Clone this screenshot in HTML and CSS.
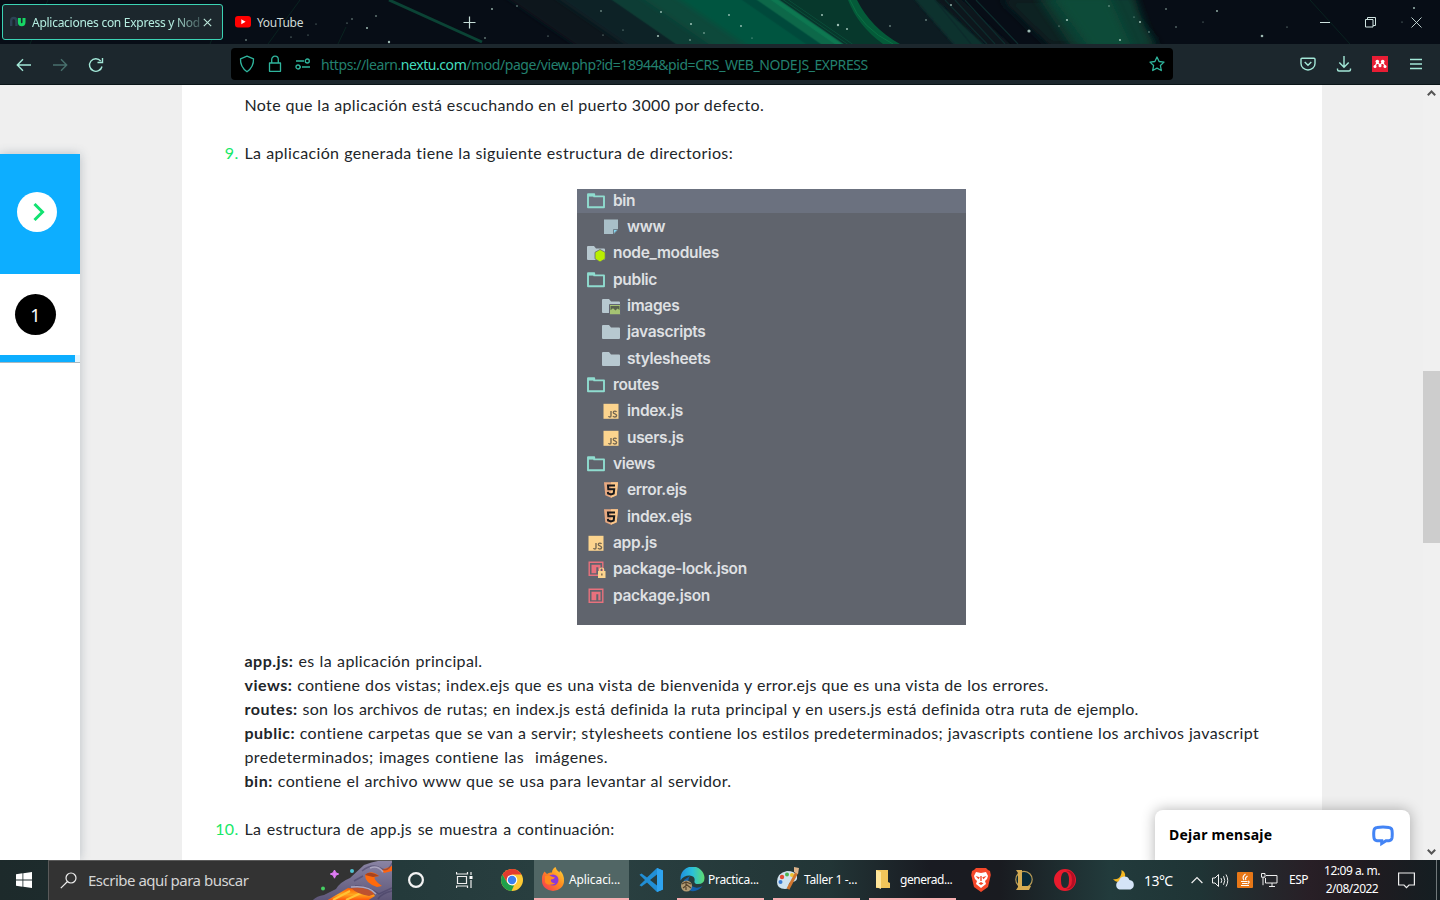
FILE: index.html
```html
<!DOCTYPE html>
<html lang="es">
<head>
<meta charset="utf-8">
<title>Aplicaciones con Express y NodeJS</title>
<link rel="stylesheet" href="styles.css">
</head>
<body>
<svg class="defs" width="0" height="0">
  <defs>
    <linearGradient id="ff" x1="1" y1="0" x2="0" y2="1"><stop offset="0" stop-color="#ffe13c"/><stop offset=".45" stop-color="#ff8a1e"/><stop offset="1" stop-color="#f5305a"/></linearGradient>
    <linearGradient id="edge" x1="0" y1="0" x2="1" y2="0"><stop offset="0" stop-color="#1f8fe0"/><stop offset=".5" stop-color="#2bc0d8"/><stop offset="1" stop-color="#5ddc70"/></linearGradient>
    <linearGradient id="lava" x1="0" y1="0" x2="0" y2="1"><stop offset="0" stop-color="#ff5a00"/><stop offset=".5" stop-color="#ffa51e"/><stop offset="1" stop-color="#ff4a08"/></linearGradient>
    <linearGradient id="rock" x1="0" y1="0" x2="0" y2="1"><stop offset="0" stop-color="#8a84a4"/><stop offset="1" stop-color="#5c5577"/></linearGradient>
    <symbol id="i-open" viewBox="0 0 18 16"><path d="M1 14.2V1.2h6.2v2.2H17v10.8z" fill="none" stroke="#8fdccf" stroke-width="1.9" stroke-linejoin="round"/><path d="M1 1h6v2.6H1z" fill="#8fdccf"/></symbol>
    <symbol id="i-folder" viewBox="0 0 18 16"><path d="M0 2Q0 1 1 1h6l2 2.4h8q1 0 1 1V14q0 1-1 1H1q-1 0-1-1z" fill="#b7c8d0"/></symbol>
    <symbol id="i-js" viewBox="0 0 18 16"><path d="M1.500 .8h15v15H1.500z" fill="#fcd48e"/><path d="M9 8v4.700q0 1.300-1.100 1.300T6.500 13.100M14.500 9q-.5-.9-1.700-.9-1.500 0-1.500 1.300 0 1 1.600 1.400 1.700.5 1.700 1.700 0 1.500-1.800 1.500-1.300 0-1.800-1" fill="none" stroke="#776953" stroke-width="1.400"/></symbol>
    <symbol id="i-html" viewBox="0 0 18 16"><path d="M2 .3h14l-1.300 13L9 15.700l-5.700-2.400z" fill="#e8a981"/><path d="M9 .3h7l-1.300 13L9 15.700z" fill="#fbc78a"/><path d="M13 3.600H6l.3 3.600h5.900l-.5 4.300L9 12.400l-2.900-.9-.2-1.600" fill="none" stroke="#17181b" stroke-width="2"/></symbol>
    <symbol id="i-npm" viewBox="0 0 18 16"><path d="M2.200 1.300h13.600v13H2.200z" fill="none" stroke="#e8717d" stroke-width="1.400"/><path d="M4.500 3.700h9v8.600h-2.200V6.200h-2v6.100H4.500z" fill="#e8717d"/></symbol>
  </defs>
</svg>

<header class="tabs">
  <svg class="sky" viewBox="0 0 1440 44">
    <defs>
      <filter id="soft" x="-20%" y="-50%" width="140%" height="200%"><feGaussianBlur stdDeviation="4"/></filter>
      <filter id="soft1" x="-20%" y="-50%" width="140%" height="200%"><feGaussianBlur stdDeviation="1"/></filter>
    </defs>
    <rect width="1440" height="44" fill="#070d16"/>
    <g transform="matrix(1 0 1.450 1 0 0)">
      <path d="M510-10h60v64h-60z" fill="#09161d" filter="url(#soft)"/>
      <path d="M560-10h330v64H560z" fill="#0a2426" filter="url(#soft)"/>
      <path d="M612-10h70v64h-70z" fill="#0a3c35" filter="url(#soft1)"/>
      <path d="M645-10h60v64h-60z" fill="#08483a" filter="url(#soft)"/>
      <path d="M680-10h90v64h-90z" fill="#065441" filter="url(#soft)"/>
      <path d="M742-10h18v64h-18z" fill="#05493a" filter="url(#soft1)"/>
      <path d="M757-10h23v64h-23z" fill="#086848" filter="url(#soft1)"/>
      <path d="M771-10h7v64h-7z" fill="#0a7851" filter="url(#soft1)"/>
      <path d="M781-10h70v64h-70z" fill="#07382c"/>
      <path d="M783-10h1v64h-1zM788-10h1v64h-1z" fill="#0b543e"/>
    </g>
    <path d="M853-2h60q20 20 65 48h-82Q865 28 853-2z" fill="#0a1d21" filter="url(#soft1)"/>
    <path d="M848 0h9q14 28 43 44h-17Q858 26 848 0z" fill="#045b39"/>
    <path d="M850 0Q861 28 893 44" fill="none" stroke="#0a7044"/>
    <path d="M913-2h22l52 48h-32z" fill="#0e302f" filter="url(#soft1)"/>
    <path d="M935-2h25l52 48h-25z" fill="#09191f" filter="url(#soft1)"/>
    <path d="M955 0l40 44M965 0l40 44M976 0l42 44M945 0l42 44M935 0l36 44" stroke="#0d2b2c" stroke-width="1.300"/>
    <path d="M1000-2h120l40 48h-110z" fill="#082022" filter="url(#soft)"/>
    <path d="M1036-6h98q8 30 22 56h-82z" fill="#0b3e31" filter="url(#soft)"/>
    <path d="M1050-6h58l25 56h-42z" fill="#0d503a" opacity=".8" filter="url(#soft)"/>
    <path d="M389 0l93 42" stroke="#0b4335" stroke-width="3"/>
    <path d="M222 14l-12 30M346 27l-8 17M48 0L30 44M300 0l-32 44M1310 0l40 44" stroke="#0a2320"/>
    <g fill="#b9d8ce" opacity=".85">
      <circle cx="389" cy="42" r="1.200"/><circle cx="367" cy="28" r="1"/><circle cx="376" cy="16" r=".8"/><circle cx="352" cy="19" r=".7"/><circle cx="347" cy="23" r=".6"/><circle cx="316" cy="24" r=".5"/><circle cx="246" cy="40" r=".8"/><circle cx="291" cy="37" r=".6"/><circle cx="308" cy="35" r=".5"/>
      <circle cx="492" cy="9" r=".9"/><circle cx="517" cy="6" r=".7"/><circle cx="485" cy="38" r=".8"/><circle cx="548" cy="36" r=".6"/><circle cx="601" cy="11" r=".8"/><circle cx="603" cy="35" r=".6"/><circle cx="623" cy="30" r=".6"/><circle cx="661" cy="12" r=".9"/><circle cx="658" cy="36" r="1.100"/><circle cx="691" cy="24" r="1"/><circle cx="704" cy="33" r=".8"/><circle cx="690" cy="40" r=".8"/><circle cx="729" cy="15" r=".9"/><circle cx="741" cy="26" r=".9"/><circle cx="752" cy="38" r=".6"/><circle cx="822" cy="15" r="1"/><circle cx="838" cy="25" r="1.200"/><circle cx="847" cy="29" r="1"/><circle cx="890" cy="26" r=".8"/><circle cx="926" cy="20" r=".8"/><circle cx="951" cy="5" r=".9"/>
      <circle cx="1029" cy="31" r="1.600"/><circle cx="1067" cy="20" r="1.100"/><circle cx="1059" cy="26" r=".6"/><circle cx="1109" cy="6" r=".7"/><circle cx="1134" cy="17" r=".6"/><circle cx="1140" cy="22" r="1"/><circle cx="1120" cy="40" r="1"/><circle cx="1149" cy="32" r=".7"/><circle cx="1166" cy="9" r=".8"/><circle cx="1217" cy="11" r=".9"/><circle cx="1262" cy="36" r="1.300"/><circle cx="1176" cy="27" r=".7"/><circle cx="1203" cy="22" r=".5"/><circle cx="1287" cy="27" r=".6"/><circle cx="1402" cy="22" r=".5"/><circle cx="1414" cy="8" r="1"/>
    </g>
  </svg>
  <div class="tab active">
    <svg width="16" height="12" viewBox="0 0 16 12"><path d="M1.200 10V5q0-3 2.600-3t2.600 3v5" fill="none" stroke="#2d4254" stroke-width="2.400"/><path d="M9.400 2v4.200q0 2.500 2.300 2.500T14 6.200V2" fill="none" stroke="#17d765" stroke-width="3"/></svg>
    <span class="tab-title fade">Aplicaciones con Express y Nod</span>
    <svg class="tab-x" width="9" height="9" viewBox="0 0 9 9"><path d="M.8.8l7.400 7.400M8.200.8L.8 8.200" stroke="#bdeadd" stroke-width="1.100"/></svg>
  </div>
  <div class="tab">
    <svg width="16" height="12" viewBox="0 0 16 12"><rect width="16" height="11.500" rx="3" fill="#f00"/><path d="M6.300 3.300v5l4.300-2.500z" fill="#fff"/></svg>
    <span class="tab-title yt">YouTube</span>
  </div>
  <svg class="plus" width="13" height="13" viewBox="0 0 13 13"><path d="M6.500.5v12M.5 6.500h12" stroke="#c6ddd8" stroke-width="1.200"/></svg>
  <div class="win">
    <svg width="10" height="11" viewBox="0 0 10 11"><path d="M0 5.500h10" stroke="#cfe3e0"/></svg>
    <svg width="11" height="11" viewBox="0 0 11 11"><path d="M.5 2.500h7.500v7.500H.5zM2.500 2.500v-2h8v8H8" fill="none" stroke="#cfe3e0"/></svg>
    <svg width="11" height="11" viewBox="0 0 11 11"><path d="M.5.5l10 10M10.500.5l-10 10" stroke="#cfe3e0" stroke-width=".9"/></svg>
  </div>
</header>

<nav class="toolbar">
  <div class="nav-btns">
    <svg width="16" height="16" viewBox="0 0 16 16"><path d="M15 8H1.500M7 2.300L1.300 8 7 13.700" class="mint"/></svg>
    <svg width="16" height="16" viewBox="0 0 16 16"><path d="M1 8h13.500M9 2.300L14.700 8 9 13.700" class="mint dim"/></svg>
    <svg width="16" height="16" viewBox="0 0 16 16"><path d="M14 9.500A6.300 6.300 0 1 1 12.700 4M9.500 5.500h5V1" class="mint"/></svg>
  </div>
  <div class="url">
    <svg width="16" height="18" viewBox="0 0 16 18"><path d="M8 1.200l6.500 2.600q.4 8.200-6.500 13Q1.100 12 1.500 3.800z" class="teal"/></svg>
    <svg width="14" height="18" viewBox="0 0 14 18"><path d="M1.500 8h11v8.300h-11zM3.700 8V4.500a3.300 3.300 0 0 1 6.600 0V8" class="teal"/></svg>
    <svg width="16" height="12" viewBox="0 0 16 12"><path d="M1 3h8M7 9h8M5 9h1" class="teal"/><circle cx="12.300" cy="3" r="2" class="teal"/><circle cx="3" cy="9" r="2" class="teal"/></svg>
    <span class="addr">https://learn.<b>nextu.com</b>/mod/page/view.php?id=18944&amp;pid=CRS_WEB_NODEJS_EXPRESS</span>
    <svg class="star" width="16" height="16" viewBox="0 0 16 16"><path d="M8 1l2.100 4.500 4.900.6-3.600 3.400.9 5L8 12.100l-4.300 2.400.9-5L1 6.100l4.900-.6z" class="teal"/></svg>
  </div>
  <div class="tools">
    <svg width="16" height="16" viewBox="0 0 16 16"><path d="M2 2.200h12q1 0 1 1V7.500a7 6.500 0 0 1-14 0V3.200q0-1 1-1zM4.700 6L8 9.200 11.300 6" class="mint"/></svg>
    <svg width="16" height="18" viewBox="0 0 16 18"><path d="M8 1v11M3.300 7.500L8 12.200l4.700-4.700M1.500 13.500v1q0 1.500 1.500 1.500h10q1.500 0 1.500-1.500v-1" class="mint"/></svg>
    <svg width="16" height="16" viewBox="0 0 16 16"><path fill="#e81d34" d="M0 0h16v16H0z"/><path d="M3 10.500L5.200 6l2.800 3 2.800-3L13 10.500" fill="none" stroke="#fff" stroke-width="1.200"/><g fill="#fff"><circle cx="5.300" cy="5.500" r="1.800"/><circle cx="10.700" cy="5.500" r="1.800"/><circle cx="8" cy="9.800" r="1.500"/><circle cx="3" cy="10.500" r="1.500"/><circle cx="13" cy="10.500" r="1.500"/></g></svg>
    <svg width="12" height="12" viewBox="0 0 12 12"><path d="M0 1.500h12M0 6h12M0 10.500h12" class="mint"/></svg>
  </div>
</nav>

<div class="page">
  <aside class="side">
    <div class="side-toggle"><span class="disc"><svg width="12" height="20" viewBox="0 0 12 20"><path d="M1.500 2l8 8-8 8" fill="none" stroke="#12e271" stroke-width="3"/></svg></span></div>
    <div class="side-unit"><span class="num">1</span></div>
    <div class="side-bar"></div>
  </aside>
  <main class="article">
    <p class="line w518">Note que la aplicación está escuchando en el puerto 3000 por defecto.</p>
    <div class="step"><span class="n">9.</span><p class="line w489">La aplicación generada tiene la siguiente estructura de directorios:</p></div>
    <div class="tree">
      <div class="row"><svg><use href="#i-open"/></svg>bin</div>
      <div class="row sub"><svg viewBox="0 0 18 16"><path d="M2 .5h14v10L12 15H2z" fill="#a9bfc8"/><path d="M11.500 15v-4.500H16z" fill="#83d5f0" stroke="#5b6069" stroke-width=".7"/></svg>www</div>
      <div class="row"><svg viewBox="0 0 18 16"><use href="#i-folder" width="18" height="16"/><path d="M13 4.500l5.200 2.800v6.500L13 17l-5-3.200V7.300z" fill="#b9ef00" stroke="#626672" stroke-width=".8"/></svg>node_modules</div>
      <div class="row"><svg><use href="#i-open"/></svg>public</div>
      <div class="row sub"><svg viewBox="0 0 18 16"><use href="#i-folder" width="18" height="16"/><path d="M7.500 6.500h11v10.300h-11z" fill="#a5c373" stroke="#626672"/><path d="M8.500 8h9v4l-2-1.500-2 2-2.500-2.300-2.500 2z" fill="#58624f"/></svg>images</div>
      <div class="row sub"><svg><use href="#i-folder"/></svg>javascripts</div>
      <div class="row sub"><svg><use href="#i-folder"/></svg>stylesheets</div>
      <div class="row"><svg><use href="#i-open"/></svg>routes</div>
      <div class="row sub"><svg><use href="#i-js"/></svg>index.js</div>
      <div class="row sub"><svg><use href="#i-js"/></svg>users.js</div>
      <div class="row"><svg><use href="#i-open"/></svg>views</div>
      <div class="row sub"><svg><use href="#i-html"/></svg>error.ejs</div>
      <div class="row sub"><svg><use href="#i-html"/></svg>index.ejs</div>
      <div class="row"><svg><use href="#i-js"/></svg>app.js</div>
      <div class="row"><svg viewBox="0 0 18 16"><use href="#i-npm" width="18" height="16"/><path d="M11 10h7.500v7H11z" fill="#fcd48e"/><path d="M12.800 10V8.500q0-1.500 1.900-1.500t1.900 1.500V10" fill="none" stroke="#fcd48e" stroke-width="1.200"/><path d="M14.200 12.500h1.300v2h-1.300z" fill="#6b5b48"/></svg>package-lock.json</div>
      <div class="row"><svg><use href="#i-npm"/></svg>package.json</div>
    </div>
    <p class="line w238"><b>app.js:</b> es la aplicación principal.</p>
    <p class="line w804"><b>views:</b> contiene dos vistas; index.ejs que es una vista de bienvenida y error.ejs que es una vista de los errores.</p>
    <p class="line w894"><b>routes:</b> son los archivos de rutas; en index.js está definida la ruta principal y en users.js está definida otra ruta de ejemplo.</p>
    <p class="line w1015"><b>public:</b> contiene carpetas que se van a servir; stylesheets contiene los estilos predeterminados; javascripts contiene los archivos javascript</p>
    <p class="line w363">predeterminados; images contiene las&nbsp; imágenes.</p>
    <p class="line w487"><b>bin:</b> contiene el archivo www que se usa para levantar al servidor.</p>
    <div class="step last"><span class="n">10.</span><p class="line w370">La estructura de app.js se muestra a continuación:</p></div>
  </main>
  <div class="scroll">
    <svg width="9" height="6" viewBox="0 0 9 6"><path d="M.8 5.200l3.700-3.700 3.700 3.700" fill="none" stroke="#555" stroke-width="2"/></svg>
    <div class="thumb"></div>
    <svg width="9" height="6" viewBox="0 0 9 6"><path d="M.8.8l3.700 3.700L8.200.8" fill="none" stroke="#555" stroke-width="2"/></svg>
  </div>
  <div class="chat"><span>Dejar mensaje</span>
    <svg width="22" height="22" viewBox="0 0 22 22"><path d="M5 2.500Q11 1.600 17 2.500q2.500.3 3 2.700.5 3.900 0 7.800-.5 2.500-3 2.700h-3L9.700 18.500v-2.800H5q-2.600-.2-3-2.700-.6-3.900 0-7.800.4-2.400 3-2.700z" fill="none" stroke="#4384f5" stroke-width="3"/></svg>
  </div>
</div>

<footer class="taskbar">
  <div class="start"><svg width="16" height="16" viewBox="0 0 16 16"><path d="M0 2.300L6.500 1.300V7.500H0zM7.300 1.200L16 0v7.500H7.300zM0 8.400h6.500v6.300L0 13.700zM7.300 8.400H16V16l-8.700-1.200z" fill="#fff"/></svg></div>
  <div class="search">
    <svg width="17" height="17" viewBox="0 0 17 17"><circle cx="11" cy="6" r="5" fill="none" stroke="#eee" stroke-width="1.200"/><path d="M7.500 9.500L.8 16.200" stroke="#eee" stroke-width="1.200"/></svg>
    <span>Escribe aquí para buscar</span>
    <svg class="art" width="84" height="40" viewBox="0 0 84 40">
      <path d="M4 40q4-5 12-6l12-6q4-7 14-11L56 4Q64 1 70 0h14v40z" fill="url(#rock)"/>
      <path d="M18 40l22-13 24 3 3 5-8 5z" fill="url(#lava)"/><path d="M25 39l17-9M38 39l15-7" stroke="#ffc335" stroke-width="2"/>
      <path d="M43 27q14-3 24 6l-6 2q-12-2-18-8z" fill="#bd5230"/>
      <path d="M57 14q6-6 14 1l-4 1q-2 1 3 6l4 3-5 1q-12-4-12-12z" fill="#ff6a0c"/><path d="M57 14q4-5 14 1l-6 1z" fill="#a8431f"/>
      <path d="M73 9l11-4v5l-8 2z" fill="#ff6310"/>
      <path d="M47 25q12 0 24 8l13-6M54 10q10-8 18-3t12-5M46 20l9-5M70 38q4-6 14-8" fill="none" stroke="#403960" stroke-width="1.500" opacity=".5"/>
      <path d="M43 26q18-2 25 7M62 7q8-3 13 4" fill="none" stroke="#aaa5bf" stroke-width="1.500"/>
      <path d="M26.500 9l1.300 2.700 2.900 1.300-2.900 1.300-1.300 2.900-1.300-2.900-2.900-1.300 2.900-1.300z" fill="#e07cf5" stroke="#e07cf5"/><circle cx="44" cy="10" r="2" fill="#51c4d3"/><circle cx="15" cy="27.500" r="2" fill="#45cf62"/>
    </svg>
  </div>
  <div class="slot w48"><svg width="18" height="18" viewBox="0 0 18 18"><circle cx="9" cy="9" r="6.900" fill="none" stroke="#f3f3f3" stroke-width="2.200"/></svg></div>
  <div class="slot w48"><svg width="17" height="16" viewBox="0 0 17 16"><path d="M1.500 4.500h9v7h-9zM.5 0v2h11V0M.5 16v-2h11v2M15 0v3M15 8v8" fill="none" stroke="#eee" stroke-width="1.200"/><path d="M13.500 4h3v3h-3z" fill="#fff"/></svg></div>
  <div class="slot w48 chrome"><svg width="22" height="22" viewBox="0 0 22 22"><circle cx="11" cy="11" r="11" fill="#fcc934"/><path d="M1.500 5.500A11 11 0 0 1 20.500 5.500H11l-4.800 8.200z" fill="#e33b2e"/><path d="M1.500 5.500l4.700 8.200L11 16.500h2L10.500 22A11 11 0 0 1 1.500 5.500z" fill="#1fa04b"/><circle cx="11" cy="11" r="5.300" fill="#fff"/><circle cx="11" cy="11" r="4.200" fill="#3c80ee"/></svg></div>
  <div class="app on w95"><svg width="24" height="24" viewBox="0 0 24 24"><path d="M1 14Q.5 8 3.500 4.500L6 7q2-2 5-1.500Q11 2 14.500 0q.5 3 4 5.500l.5-2q4.500 4.500 4 10.500a11 10 0 0 1-22 0z" fill="url(#ff)"/><circle cx="12" cy="13" r="5.500" fill="#8c39d8"/><path d="M4 9q4-1.500 8 1l2 .5q-1 2-4 2-1 3.500 4.500 4Q6 19.500 4 15z" fill="#ff8a1e"/></svg><span class="t-ff">Aplicaci...</span></div>
  <div class="slot w44"><svg width="24" height="24" viewBox="0 0 24 24"><path d="M18 0l6 2.500v19L18 24 8 14.500 2.500 18.500.5 17.300 6 12 .5 6.700l2-1.200L8 9.500zM18 6.500L11 12l7 5.500z" fill="#218fd6" fill-rule="evenodd"/><path d="M18 0l6 2.500v19L18 24z" fill="#2ea3ef"/></svg></div>
  <div class="app w87 edge"><svg width="25" height="25" viewBox="0 0 25 25"><path d="M.5 12A12 12 0 0 1 24.500 11q0 6-6.500 6-4 0-3.500-3 1-5-5-5.500-6 0-9 5z" fill="url(#edge)"/><path d="M10 9q-4 5 1 9.500 5 4 11.500.5Q18 25 11 24 2 21 4 13z" fill="#1461ad"/><circle cx="6.500" cy="19" r="5.500" fill="#b29b73"/><path d="M2 17l4-2 5 2M3 21l4-3 4 3M6 15v8" stroke="#57442c" stroke-width="1.200" fill="none"/></svg><span class="t-ed">Practica...</span></div>
  <div class="app w87"><svg width="25" height="24" viewBox="0 0 25 24"><path d="M1 15Q1 6 11 4q8 0 10 5 1 6-6 6-3 1-2 4 0 3-4 3-8 0-8-7z" fill="#cfe2ee"/><circle cx="6" cy="10" r="2.200" fill="#e34a34"/><circle cx="11" cy="7.500" r="2" fill="#4bb351"/><circle cx="4.500" cy="15" r="2" fill="#3a7ad1"/><circle cx="16" cy="8" r="2" fill="#eec32f"/><path d="M21 5l-9 17" stroke="#cf762f" stroke-width="3"/><path d="M18 0l5 1-1 6-4-2z" fill="#ddb48b"/></svg><span class="t-pt">Taller 1 -...</span></div>
  <div class="app w87 folder"><svg width="16" height="20" viewBox="0 0 16 20"><path d="M1 1h12v12l2 1v5H1z" fill="#f2c55a"/><path d="M1 1l5 2v17l-5-2z" fill="#ffe59a"/></svg><span class="t-fo">generad...</span></div>
  <div class="slot w50"><svg width="20" height="24" viewBox="0 0 20 24"><path d="M5 0h10l2 2 2 1 .8 4-2.800 12L10 24 3 19 .2 7 1 3l2-1z" fill="#f5482a"/><path d="M5 4l5 1 5-1 2 4-1 3-2 2 1 3-5 4-5-4 1-3-2-2-1-3z" fill="#fff"/><path d="M4.500 8l4.300 1.200-1.300 2zM15.500 8l-4.300 1.200 1.300 2zM7.500 15.500L10 14l2.500 1.500L10 17zM9.300 8h1.400v5H9.300z" fill="#f5482a"/></svg></div>
  <div class="slot w34"><svg width="20" height="22" viewBox="0 0 20 22"><circle cx="11" cy="10.500" r="8.200" fill="#092937" stroke="#b89a55" stroke-width="1.200"/><path d="M3 1h6v16h9l-2 4H3l2-3V4z" fill="#d5ab52"/></svg></div>
  <div class="slot w48 opera"><svg width="22" height="22" viewBox="0 0 22 22"><path d="M11 0a11 11 0 1 0 0 22 11 11 0 0 0 0-22zm0 3q4 0 4 8t-4 8-4-8 4-8z" fill="#e91b2d" fill-rule="evenodd"/><path d="M12 2q6 1 6 9t-6 9q5 1 8-4 2-5 0-10-3-5-8-4z" fill="#b50f25"/></svg></div>
  <div class="weather"><svg width="23" height="20" viewBox="0 0 23 20"><path d="M8.500 0q4.500 2 3.500 7-1 5-6 5-4 0-6-3 5 1 7.500-3Q9 3 8.500 0z" fill="#f5b721"/><path d="M6.500 19.500a4.500 4.500 0 0 1-.5-8.500 5.500 5.500 0 0 1 10.500-1 4.900 4.900 0 0 1 1 9.500z" fill="#d5e4f7"/></svg><span>13°C</span></div>
  <div class="tray">
    <svg width="12" height="8" viewBox="0 0 12 8"><path d="M.6 7L6 1.500 11.400 7" fill="none" stroke="#eee" stroke-width="1.200"/></svg>
    <svg width="18" height="15" viewBox="0 0 18 15"><path d="M1.500 5H4l3.500-3.500v12L4 10H1.500zM10 5q1.500 2.500 0 5M12.500 3.200q2.500 4.300 0 8.600M15 1.500q3.500 6 0 12" fill="none" stroke="#eee"/></svg>
    <svg width="16" height="16" viewBox="0 0 16 16"><rect width="16" height="16" rx="1" fill="#e77717"/><path d="M8.500 2q-4 3-1.500 6M10.500 4q-3 2-1.500 4M4 9.500h6.500M5 11.500h5M4 13.500h8M11 9q2.500 1-.5 3" fill="none" stroke="#fff" stroke-width="1.200"/></svg>
    <svg width="17" height="14" viewBox="0 0 17 14"><path d="M5 2.500h11v7.500H4.500V5M8 13.500h6M11 10v3.500M.5.500H4v3.700H.5zM2 4.200v8" fill="none" stroke="#eee"/></svg>
    <span class="lang">ESP</span>
  </div>
  <div class="clock"><span class="hour">12:09 a. m.</span><span class="date">2/08/2022</span></div>
  <svg class="note" width="17" height="17" viewBox="0 0 17 17"><path d="M.6 1h15.800v12H11l-2.500 2.700L6 13H.6z" fill="none" stroke="#eee" stroke-width="1.200"/></svg>
</footer>
</body>
</html>
```
FILE: styles.css
```css
* { box-sizing: border-box; }
body { margin: 0; width: 1440px; height: 900px; overflow: hidden; display: flex; flex-direction: column; font-family: "Noto Sans", "Open Sans", sans-serif; }
svg { display: block; flex: none; }
.defs { position: absolute; }
p { margin: 0; }
.mint { fill: none; stroke: #a3e8d8; stroke-width: 1.4; }
.dim { stroke: #48706d; }
.teal { fill: none; stroke: #2fb59d; stroke-width: 1.3; stroke-linejoin: round; }

.tabs { position: relative; height: 44px; flex: none; display: flex; align-items: center; padding-left: 2px; overflow: hidden; }
.sky { position: absolute; inset: 0; width: 1440px; height: 44px; }
.tab { position: relative; display: flex; align-items: center; width: 225px; height: 36px; padding-left: 12px; }
.tab.active { width: 221px; padding-left: 7px; background: #1c272d; border: 1px solid #3bd3b4; border-radius: 3px; }
.tab-title { margin-left: 6px; font-size: 12px; color: #b5eee1; white-space: nowrap; }
.active .tab-title { width: 168px; letter-spacing: -.27px; }
.fade { -webkit-mask-image: linear-gradient(90deg, #000 84%, rgba(0,0,0,.25) 100%); mask-image: linear-gradient(90deg, #000 84%, rgba(0,0,0,.25) 100%); }
.tab-title.yt { color: #cfdad7; letter-spacing: -.35px; }
.tab-x { margin-left: 3px; }
.plus { position: relative; margin-left: 15px; }
.win { position: relative; margin-left: auto; margin-right: 18px; display: flex; gap: 35px; }

.toolbar { height: 41px; flex: none; display: flex; align-items: center; background: #1c272d; border-bottom: 1px solid #0a1518; }
.nav-btns { width: 231px; padding: 1px 0 0 16px; display: flex; gap: 20px; }
.url { width: 942px; height: 32px; display: flex; align-items: center; background: #000; border-radius: 4px; padding: 0 8px; }
.url svg + svg { margin-left: 13px; }
.url svg:nth-child(3) { margin-left: 13px; }
.addr { margin-left: 10px; font-size: 14px; letter-spacing: -.43px; color: #23806f; white-space: nowrap; }
.addr b { font-weight: 400; color: #43dcbe; }
.url .star { margin-left: auto; }
.tools { flex: 1; display: flex; align-items: center; gap: 20px; padding-left: 127px; }
.tools svg:last-child { margin-left: 2px; }

.page { position: relative; height: 775px; flex: none; display: flex; background: #efefef; overflow: hidden; }
.side { width: 80px; margin-top: 69px; margin-right: 102px; background: #fff; box-shadow: 0 0 10px rgba(60,80,100,.3); }
.side-toggle { height: 120px; padding: 38px 0 0 17px; background: #0daeff; }
.disc { display: flex; align-items: center; justify-content: center; width: 40px; height: 40px; padding-left: 3px; border-radius: 50%; background: #fff; }
.side-unit { height: 81px; padding: 20px 0 0 15px; }
.num { display: block; width: 41px; height: 41px; border-radius: 50%; background: #000; color: #fff; font-size: 18px; line-height: 42px; text-align: center; }
.side-bar { height: 8px; background: linear-gradient(90deg, #0daeff 75px, #e3f5ff 75px); border-bottom: 1px solid #aab8c0; }

.article { width: 1140px; padding: 8px 0 0 62.5px; background: #fff; font-family: Lato, "Open Sans", sans-serif; font-size: 16px; line-height: 24px; color: #212529; }
.line { height: 24px; white-space: nowrap; letter-spacing: .36px; text-align-last: justify; }
.line b { letter-spacing: .5px; }
.step { display: flex; margin: 24px 0 24px -40px; }
.step.last { margin-bottom: 0; }
.step .n { width: 34px; margin-right: 6px; text-align: right; color: #17e868; letter-spacing: .3px; }
.w518 { width: 518px; } .w489 { width: 488.5px; } .w238 { width: 238px; } .w804 { width: 804px; letter-spacing: .3px; } .w894 { width: 894px; letter-spacing: .24px; }
.w1015 { width: 1014.5px; } .w363 { width: 363.5px; } .w487 { width: 487px; } .w370 { width: 370px; letter-spacing: .24px; }

.tree { width: 389px; height: 436px; margin: 0 0 24px 332.5px; padding-left: 10px; overflow: hidden; background: linear-gradient(#6b717f 24px, #60646d 24px); font-family: Inter, "Liberation Sans", sans-serif; font-size: 15.5px; font-weight: 600; color: #dfe0e3; }
.row { height: 26.33px; display: flex; align-items: center; line-height: 24px; letter-spacing: -.32px; }
.row:first-child { margin-top: -1.4px; }
.row svg { width: 18px; height: 16px; margin-right: 8px; overflow: visible; }
.row.sub { padding-left: 15px; }
.row.sub svg { margin-right: 7px; }

.scroll { width: 17px; margin-left: auto; background: #f0f0f0; display: flex; flex-direction: column; align-items: center; padding: 5px 0; }
.thumb { width: 17px; height: 172px; margin: 275px 0 auto; background: #cdcdcd; }
.chat { position: absolute; left: 1155px; top: 725px; width: 255px; height: 60px; padding: 0 16px 10px 14px; display: flex; align-items: center; justify-content: space-between; background: #fff; border-radius: 8px 8px 0 0; box-shadow: 0 0 14px rgba(0,0,0,.3); font-size: 14px; font-weight: 700; color: #000; }
.chat span { padding-bottom: 2px; letter-spacing: .25px; }
.chat svg { margin-top: 2px; }

.taskbar { height: 40px; flex: none; display: flex; align-items: center; color: #fff; font-size: 12px; background: linear-gradient(90deg, #1d2a2b 0, #1d2b2c 50px, #243a3b 400px, #2a4041 600px, #223536 830px, #191b22 930px, #191b20 1000px, #223b3c 1110px, #1f3435 1200px, #281f26 1310px, #211b20 1360px, #141e22 1440px); }
.taskbar > div { height: 40px; flex: none; display: flex; align-items: center; }
.start { width: 48px; justify-content: center; }
.search { width: 344px; background: #333; border: 1px solid #5a5a5a; border-right: 0; border-bottom: 0; padding-left: 11px; overflow: hidden; font-size: 15px; color: #d5d5d5; }
.search span { width: 162px; margin-left: 11px; padding-bottom: 2px; white-space: nowrap; letter-spacing: -.5px; }
.art { margin-left: auto; }
.slot { justify-content: center; }
.w48 { width: 48px; } .w44 { width: 44px; margin-right: 4px; } .w50 { width: 50px; } .w34 { width: 34px; }
.chrome { margin-right: -2px; }
.opera { padding-left: 2px; }
.w95 { width: 95px; } .w87 { width: 87px; }
.app { padding-left: 3px; border-bottom: 2px solid #f6adb0; white-space: nowrap; }
.app.on { background: #516665; padding-left: 7px; }
.app + .app { margin-left: 9px; }
.app span { margin-left: 4px; letter-spacing: -.3px; }
.app .t-ff { letter-spacing: -.1px; }
.app .t-ed, .app .t-pt { margin-left: 3px; }
.app.folder { padding-left: 6px; }
.app.folder span { margin-left: 9px; letter-spacing: -.45px; }
.weather { margin-left: 25px; width: 78px; font-size: 14px; }
.weather span { margin-left: 8px; letter-spacing: -.55px; }
.tray { gap: 8px; width: 120px; }
.lang { margin-left: 3px; padding-bottom: 2px; letter-spacing: -.5px; }
.taskbar > .clock { width: 80px; margin-left: 1px; flex-direction: column; justify-content: center; line-height: 18px; letter-spacing: -.5px; }
.note { margin-left: 6px; margin-right: 21px; }
.taskbar::after { content: ""; height: 40px; border-left: 1px solid #70787a; }
```
